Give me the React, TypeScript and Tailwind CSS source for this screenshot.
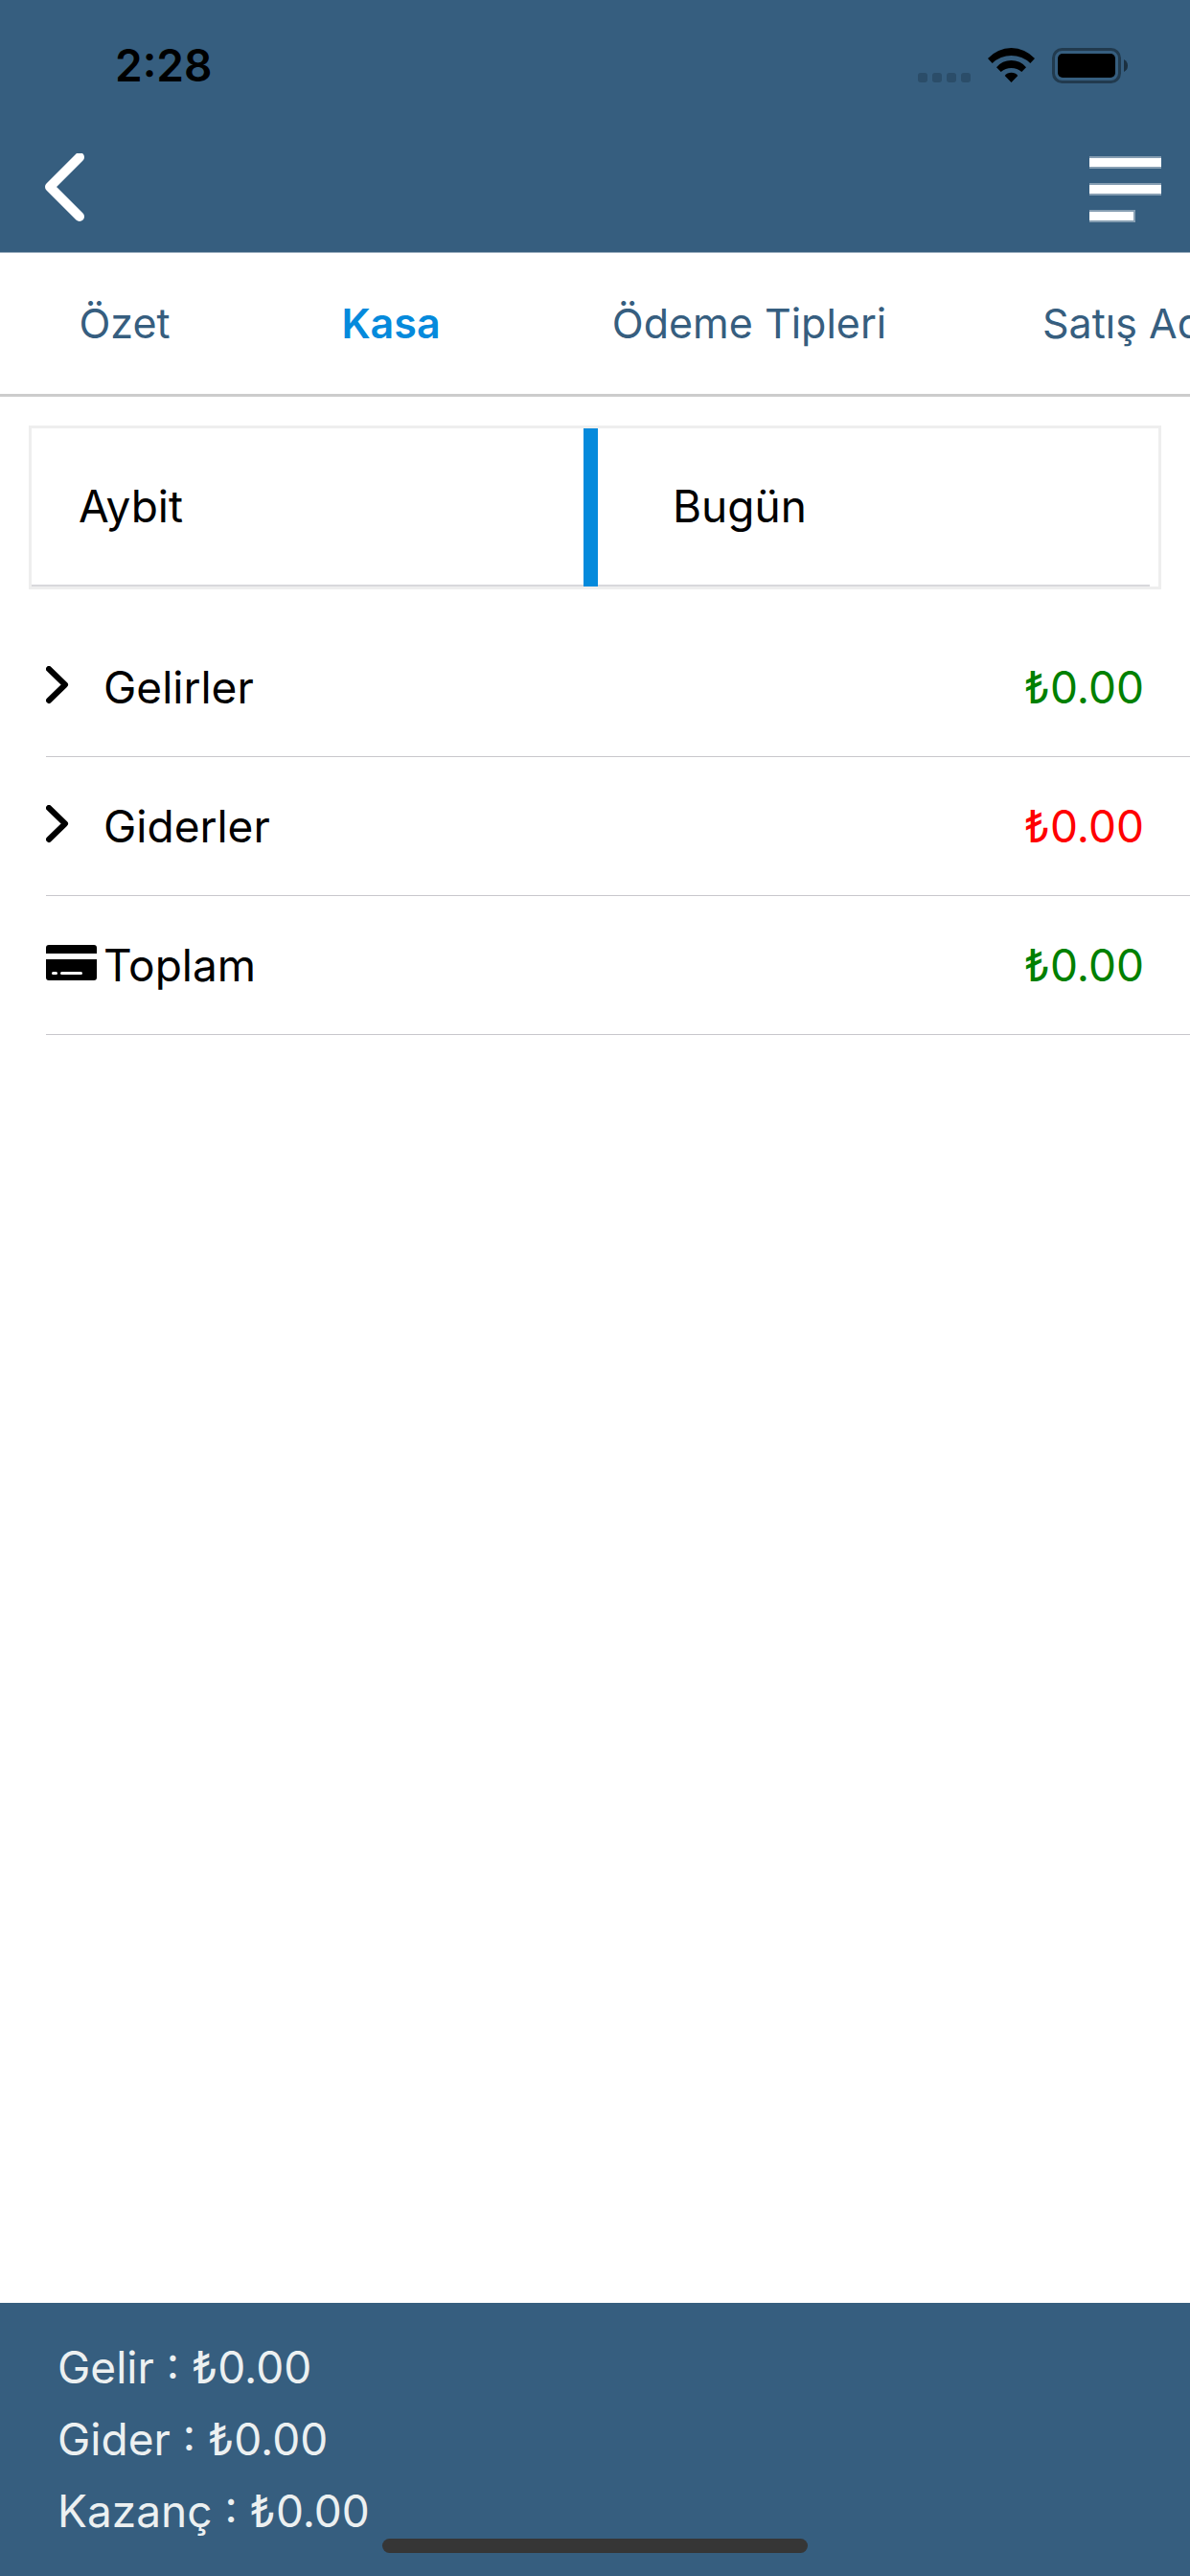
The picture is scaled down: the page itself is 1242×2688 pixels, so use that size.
import {useState} from "react";

const tabs = [
    {name: "Özet", width: "w-[260px]"},
    {name: "Kasa", width: "w-[296px]"},
    {name: "Ödeme Tipleri", width: "w-[452px]"},
    {name: "Satış Adetleri", width: "px-20"},
];

const totals = [
    {label: "Gelir", amount: "₺0.00"},
    {label: "Gider", amount: "₺0.00"},
    {label: "Kazanç", amount: "₺0.00"},
];

function StatusIcons() {
    return (
        <svg className="w-[219px] h-[37px]" viewBox="0 0 219 37" aria-hidden="true">
            <g fill="#2b4d69">
                <rect x="0" y="26" width="10" height="10" rx="3"/>
                <rect x="15" y="26" width="10" height="10" rx="3"/>
                <rect x="30" y="26" width="10" height="10" rx="3"/>
                <rect x="45" y="26" width="10" height="10" rx="3"/>
            </g>
            <g transform="translate(73 0)">
                <path d="M0 11A32.8 32.8 0 0 1 49 11L44.3 16A28.5 28.5 0 0 0 4.7 16Z"/>
                <path d="M9 20.3A20 20 0 0 1 40 20.3L35.3 25A16.6 16.6 0 0 0 13.7 25Z"/>
                <path d="M17.7 29A8.6 8.6 0 0 1 31.3 29L24.5 36Z"/>
            </g>
            <rect x="141.5" y="1.5" width="69" height="34" rx="9" fill="none" stroke="#213a4e" strokeWidth="3"/>
            <rect x="146" y="6" width="60" height="25" rx="5"/>
            <path d="M215 12Q219 14 219 18.5T215 25Z" fill="#1b3040"/>
        </svg>
    );
}

function ChevronIcon() {
    return (
        <svg className="w-[54px] h-11" viewBox="0 0 54 44" fill="none" aria-hidden="true">
            <path d="M3 3L20 19.5L3 36" stroke="#000" strokeWidth="6" strokeLinecap="round" strokeLinejoin="round"/>
        </svg>
    );
}

function CardIcon() {
    return (
        <svg className="w-[54px] h-11" viewBox="0 0 54 44" aria-hidden="true">
            <path d="M0 10V4Q0 1 3 1H50Q53 1 53 4V10Z"/>
            <path d="M0 16H53V35Q53 38 50 38H3Q0 38 0 35Z"/>
            <rect x="6" y="29" width="6" height="3" rx="1.5" fill="#fff"/>
            <rect x="15" y="29" width="23" height="3" rx="1.5" fill="#fff"/>
        </svg>
    );
}

export default function App() {
    const [active, setActive] = useState("Kasa");

    return (
        <div
            className="min-h-screen flex flex-col bg-white text-black text-[46px] leading-[75px] font-['Inter','Liberation_Sans',sans-serif]">
            <header className="bg-[#365e7f] border-b border-[#9aaebf]">
                <div className="h-[132px] pt-1 pl-[120px] pr-[65px] flex items-center justify-between">
                    <span className="font-semibold">2:28</span>
                    <StatusIcons/>
                </div>
                <div className="h-[131px] pl-[46px] pr-[30px] flex items-center justify-between">
                    <button type="button" aria-label="Geri" className="cursor-pointer">
                        <svg className="w-11 h-[75px]" viewBox="0 0 44 75" fill="none">
                            <path d="M37 4L6 35L37 66" stroke="#fff" strokeWidth="10" strokeLinecap="round"
                                  strokeLinejoin="round"/>
                        </svg>
                    </button>
                    <button type="button" aria-label="Menü" className="cursor-pointer">
                        <svg className="w-[75px] h-[70px]" viewBox="0 0 75 70" fill="#fff">
                            <g opacity="0.4">
                                <rect y="0" width="75" height="13"/>
                                <rect y="28" width="75" height="13"/>
                                <rect y="56" width="48" height="13"/>
                            </g>
                            <rect y="2" width="75" height="9"/>
                            <rect y="30" width="75" height="9"/>
                            <rect y="58" width="46" height="9"/>
                        </svg>
                    </button>
                </div>
            </header>

            <nav className="flex h-[150px] overflow-hidden border-b-3 border-[#cccccc] text-[43px]">
                {tabs.map((tab) => (
                    <button
                        key={tab.name}
                        type="button"
                        onClick={() => setActive(tab.name)}
                        className={`${tab.width} shrink-0 cursor-pointer whitespace-nowrap ${active === tab.name ? "font-semibold text-[#058adc]" : "text-[#365e7f]"}`}
                    >
                        {tab.name}
                    </button>
                ))}
            </nav>

            <main className="flex-1">
                <div
                    className="mx-[30px] mt-[30px] h-[171px] grid grid-cols-[1fr_15px_1fr] border-3 border-[#eeeeee] pr-[9px]">
                    <button type="button" className="cursor-pointer border-b-2 border-[#d8d8dc] pl-[49px] text-left">
                        Aybit
                    </button>
                    <div className="bg-[#058adc]"/>
                    <button type="button" className="cursor-pointer border-b-2 border-[#d8d8dc] pl-[78px] text-left">
                        Bugün
                    </button>
                </div>

                <ul className="mt-[30px] pl-12">
                    <li className="h-[145px] flex items-center border-b border-[#c8c7cc] pr-12">
                        <button type="button" className="flex flex-1 cursor-pointer items-center gap-[6px]">
                            <ChevronIcon/>
                            Gelirler
                        </button>
                        <span className="text-[#008000]">₺0.00</span>
                    </li>
                    <li className="h-[145px] flex items-center border-b border-[#c8c7cc] pr-12">
                        <button type="button" className="flex flex-1 cursor-pointer items-center gap-[6px]">
                            <ChevronIcon/>
                            Giderler
                        </button>
                        <span className="text-[#ff0000]">₺0.00</span>
                    </li>
                    <li className="h-[145px] flex items-center border-b border-[#c8c7cc] pr-12">
                        <div className="flex flex-1 items-center gap-[6px]">
                            <CardIcon/>
                            Toplam
                        </div>
                        <span className="text-[#008000]">₺0.00</span>
                    </li>
                </ul>
            </main>

            <footer className="relative h-[285px] bg-[#365e7f] px-[60px] pt-[30px] text-[#ecf0f1]">
                {totals.map((total) => (
                    <p key={total.label}>{total.label} : {total.amount}</p>
                ))}
                <div
                    className="absolute bottom-6 left-1/2 h-[15px] w-[444px] -translate-x-1/2 rounded-full bg-[#363636]"/>
            </footer>
        </div>
    );
}
